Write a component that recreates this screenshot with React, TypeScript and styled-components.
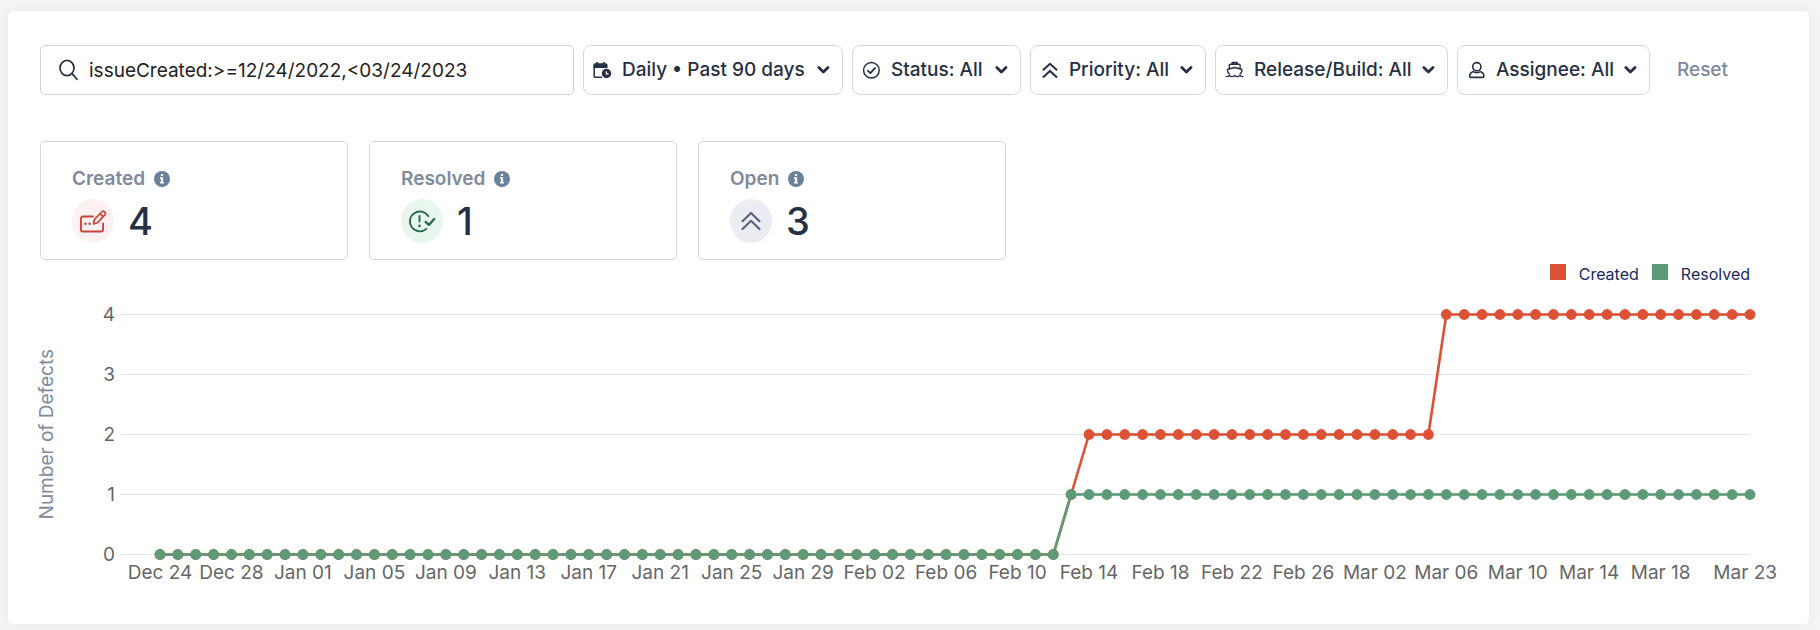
import React from "react";
import styled, { createGlobalStyle } from "styled-components";

const GlobalStyle = createGlobalStyle`
  *, *::before, *::after { box-sizing: border-box; }
  body {
    margin: 0;
    background: #f4f4f6;
    color: #263044;
    font-family: Inter, "Liberation Sans", sans-serif;
    font-size: 19px;
  }
  button, input, select { font: inherit; color: inherit; }
`;

const Page = styled.main`
  padding: 11px 11px 6px 8px;
`;

const Panel = styled.section`
  padding: 34px 32px 60px;
  border-radius: 5px;
  background: #fff;
  box-shadow: 0 0 14px rgba(40, 44, 70, 0.05);
`;

const Toolbar = styled.form`
  display: flex;
  gap: 9px;
  height: 50px;
`;

const SearchBox = styled.label`
  display: flex;
  flex: 1;
  align-items: center;
  gap: 10px;
  min-width: 0;
  padding: 0 18px;
  border: 1px solid #cfd3da;
  border-radius: 5px;
`;

const SearchInput = styled.input`
  flex: 1;
  min-width: 0;
  padding: 0;
  border: 0;
  outline: 0;
  background: none;
  color: #222;
`;

const Filter = styled.label<{ $minWidth: number }>`
  display: grid;
  grid-template-columns: 39px 1fr 26px;
  align-items: center;
  min-width: ${(p) => p.$minWidth}px;
  border: 1px solid #d5d7dd;
  border-radius: 8px;

  svg {
    grid-row: 1;
    pointer-events: none;
  }
  svg:first-child {
    grid-column: 1;
    margin-left: 9px;
  }
  svg:last-child {
    grid-column: 3;
  }
`;

const FilterSelect = styled.select`
  grid-row: 1;
  grid-column: 1 / -1;
  width: 100%;
  height: 48px;
  padding: 0 30px 2px 38px;
  border: 0;
  border-radius: 8px;
  background: none;
  appearance: none;
  font-weight: 500;
  cursor: pointer;
`;

const ResetButton = styled.button`
  padding: 0 49px 2px 18px;
  border: 0;
  background: none;
  color: #808a9b;
  font-weight: 500;
  cursor: pointer;
`;

const Stats = styled.div`
  display: grid;
  grid-template-columns: repeat(3, minmax(0, 308px));
  gap: 21px;
  margin-top: 46px;
`;

const StatCard = styled.article`
  padding: 25px 31px 16px;
  border: 1px solid #d6d7da;
  border-radius: 5px;
`;

const StatTitle = styled.h2`
  display: flex;
  align-items: center;
  gap: 9px;
  margin: 0;
  color: #808a9b;
  font-size: 19px;
  font-weight: 600;
  line-height: 24px;
`;

const StatBody = styled.div`
  display: flex;
  align-items: center;
  gap: 14px;
  margin-top: 8px;
`;

const Badge = styled.span<{ $tint: string }>`
  display: flex;
  align-items: center;
  justify-content: center;
  width: 42px;
  height: 44px;
  border-radius: 50%;
  background: ${(p) => p.$tint};
`;

const StatValue = styled.strong`
  font-size: 38px;
  font-weight: 500;
  line-height: 42px;
`;

const Legend = styled.ul`
  display: flex;
  justify-content: flex-end;
  gap: 13px;
  margin: 0 27px 0 0;
  padding: 4px 0 0;
  list-style: none;
  color: #20295f;
  font-size: 16px;
  line-height: 20px;
`;

const LegendItem = styled.li<{ $color: string }>`
  display: flex;
  gap: 13px;

  &::before {
    content: "";
    width: 16px;
    height: 16px;
    background: ${(p) => p.$color};
  }
`;

const Chart = styled.figure`
  display: flex;
  align-items: center;
  gap: 106px;
  margin: 20px 27px 0 0;
`;

const AxisTitle = styled.figcaption`
  width: 14px;
  color: #808a9b;
  line-height: 14px;
  white-space: nowrap;
  writing-mode: vertical-rl;
  transform: rotate(180deg);
`;

const Plot = styled.svg`
  display: block;
  flex: 1;
  min-width: 0;
  height: 260px;
  overflow: visible;
`;

const TickText = styled.text`
  fill: #666;
  font-size: 19px;
`;

const CREATED = "#dc5136";
const RESOLVED = "#5c9a78";
const DAYS = 90;
const ROW = 60;
const TOP = 10;

const start = Date.UTC(2022, 11, 24);
const MONTHS = ["Jan", "Feb", "Mar", "Apr", "May", "Jun", "Jul", "Aug", "Sep", "Oct", "Nov", "Dec"];

const dayLabel = (i: number) => {
  const d = new Date(start + i * 86400000);
  return `${MONTHS[d.getUTCMonth()]} ${String(d.getUTCDate()).padStart(2, "0")}`;
};

const days = Array.from({ length: DAYS }, (_, i) => i);
const created = days.map((i) => (i < 51 ? 0 : i < 52 ? 1 : i < 72 ? 2 : 4));
const resolved = days.map((i) => (i < 51 ? 0 : 1));

const xOf = (i: number) => `${(i / (DAYS - 1)) * 100}%`;
const yOf = (v: number) => TOP + (4 - v) * ROW + 0.5;

function Series({ values, color }: { values: number[]; color: string }) {
  return (
    <g stroke={color} fill={color}>
      {values.slice(1).map((v, i) => (
        <line key={i} x1={xOf(i)} y1={yOf(values[i])} x2={xOf(i + 1)} y2={yOf(v)} strokeWidth="2.6" />
      ))}
      {values.map((v, i) => (
        <circle key={i} cx={xOf(i)} cy={yOf(v)} r="5.4" stroke="none" />
      ))}
    </g>
  );
}

function TrendPlot() {
  return (
    <Plot role="img" aria-label="Defects created and resolved per day">
      {[4, 3, 2, 1, 0].map((v) => (
        <React.Fragment key={v}>
          <line x1="-40" x2="100%" y1={yOf(v)} y2={yOf(v)} stroke="#e6e6e8" />
          <TickText x="-45" y={yOf(v)} dy="6" textAnchor="end">
            {v}
          </TickText>
        </React.Fragment>
      ))}
      <Series values={created} color={CREATED} />
      <Series values={resolved} color={RESOLVED} />
      {days
        .filter((i) => i % 4 === 0 && i < 88)
        .map((i) => (
          <TickText key={i} x={xOf(i)} y={yOf(0)} dy="24" textAnchor="middle">
            {dayLabel(i)}
          </TickText>
        ))}
      <TickText x="100%" y={yOf(0)} dx="27" dy="24" textAnchor="end">
        {dayLabel(DAYS - 1)}
      </TickText>
    </Plot>
  );
}

const strokeProps = {
  fill: "none",
  stroke: "currentColor",
  strokeLinecap: "round" as const,
  strokeLinejoin: "round" as const,
  "aria-hidden": true,
};

const SearchIcon = () => (
  <svg width="20" height="22" viewBox="0 0 20 22" {...strokeProps} strokeWidth="1.7">
    <ellipse cx="8" cy="9" rx="7" ry="7.600" />
    <path d="M13 14.600L18 20.300" />
  </svg>
);

const ChevronIcon = () => (
  <svg width="14" height="10" viewBox="0 0 14 10" {...strokeProps} strokeWidth="2.8">
    <path d="M2.800 2.400L7.400 6.900l4.600-4.500" />
  </svg>
);

const CalendarIcon = () => (
  <svg width="20" height="20" viewBox="0.7 0 20 20" aria-hidden>
    <path d="M1.900 7.500V16a1.200 1.200 0 0 0 1.200 1.200h6.500" fill="none" stroke="currentColor" strokeWidth="1.500" />
    <path d="M1 8V5.200a2 2 0 0 1 2-2h1V2h1.700v1.200h4.900V2h1.700v1.200h1a2 2 0 0 1 2 2V8z" fill="currentColor" />
    <circle cx="14.200" cy="13.500" r="4.700" fill="currentColor" />
    <path d="M14 11.200v2.700h2.200" fill="none" stroke="#fff" strokeWidth="1.100" />
  </svg>
);

const StatusIcon = () => (
  <svg width="20" height="20" viewBox="0 0 20 20" {...strokeProps} strokeWidth="1.500">
    <circle cx="9.400" cy="10.300" r="7.800" />
    <path d="M5.800 10.600l2.600 2.500 4.700-5.200" strokeWidth="1.800" />
  </svg>
);

const PriorityIcon = () => (
  <svg width="20" height="20" viewBox="0 0 20 20" fill="none" stroke="currentColor" strokeWidth="2.100" aria-hidden>
    <path d="M2.900 10.300L10 3.800l7.100 6.500M2.900 17.400L10 10.900l7.100 6.500" />
  </svg>
);

const ShipIcon = () => (
  <svg width="20" height="20" viewBox="0 0 20 20" {...strokeProps} strokeWidth="1.400">
    <path d="M7.400 3.400V2.800h4.600v.6" strokeWidth="2" />
    <path d="M4.300 8.300V5.300c0-.6.400-1 1-1h8.800c.6 0 1 .4 1 1v3" />
    <path d="M4.400 14c-1.200-1-1.900-2.400-2-3.800 0-.5.200-.8.600-1L9.700 7.500l6.700 1.700c.4.200.6.500.6 1-.1 1.400-.8 2.800-2 3.800" />
    <path d="M1.300 16.600c1.500 0 2.300-.4 3.100-1.200.9.900 1.800 1.200 2.700 1.200s1.800-.4 2.600-1.200c.8.800 1.700 1.200 2.600 1.200s1.800-.4 2.700-1.200c.8.800 1.700 1.200 3 1.200" />
  </svg>
);

const UserIcon = () => (
  <svg width="20" height="20" viewBox="0 0 20 20" {...strokeProps} strokeWidth="1.600">
    <circle cx="9.800" cy="6.700" r="4.100" />
    <path d="M6.300 11.600c-2.300.8-3.600 2.600-3.600 4.700 0 .7.500 1.100 1.100 1.100h12c.6 0 1.100-.4 1.100-1.100 0-2.100-1.300-3.900-3.600-4.700-1 .7-2.200 1-3.500 1s-2.500-.3-3.500-1z" />
  </svg>
);

const InfoIcon = () => (
  <svg width="16" height="16" viewBox="0 0 16 16" aria-hidden>
    <circle cx="8" cy="8" r="8" fill="#68829c" />
    <path d="M6.900 2.900h2.200v2.200H6.900zM6 6.300h3.100v4.700H10v1.600H6V11h.9V7.900H6z" fill="#fff" />
  </svg>
);

const EditIcon = () => (
  <svg width="28" height="26" viewBox="0 0 28 26" {...strokeProps} stroke="#c8453d" strokeWidth="1.900">
    <path d="M14 8.500H3.900a2 2 0 0 0-2 2v11a2 2 0 0 0 2 2h18.200a2 2 0 0 0 2-2v-6" />
    <path d="M14.600 16l.7-4.300 7.300-7.700a2.100 2.100 0 0 1 3.200 2.800l-7.400 8z M21 5.700l3 2.900" strokeWidth="1.700" />
    <path d="M6.300 15.800h.1M10.500 15.800h.1" strokeWidth="2.400" />
  </svg>
);

const ResolveIcon = () => (
  <svg width="28" height="26" viewBox="0 0 28 26" {...strokeProps} stroke="#28694f" strokeWidth="1.800">
    <path d="M20.300 8.300A9.900 9.900 0 1 0 18.400 20.800" />
    <path d="M11.500 8v5.600" strokeWidth="1.900" />
    <path d="M11.500 17.800v.1" strokeWidth="2.600" />
    <path d="M17.600 13.900l3.300 3 5.300-5.900" strokeWidth="2.300" />
  </svg>
);

const OpenIcon = () => (
  <svg width="22" height="20" viewBox="0 0 22 20" {...strokeProps} stroke="#5c6280" strokeWidth="2.200">
    <path d="M2.500 10.200L11 2l8.500 8.200M2.500 18L11 9.800l8.500 8.200" />
  </svg>
);

const filters = [
  { name: "Date range", value: "Daily • Past 90 days", minWidth: 260, Icon: CalendarIcon },
  { name: "Status", value: "Status: All", minWidth: 169, Icon: StatusIcon },
  { name: "Priority", value: "Priority: All", minWidth: 176, Icon: PriorityIcon },
  { name: "Release or build", value: "Release/Build: All", minWidth: 233, Icon: ShipIcon },
  { name: "Assignee", value: "Assignee: All", minWidth: 193, Icon: UserIcon },
];

const stats = [
  { title: "Created", value: 4, tint: "#fdf1f1", Icon: EditIcon },
  { title: "Resolved", value: 1, tint: "#e8f6ee", Icon: ResolveIcon },
  { title: "Open", value: 3, tint: "#ecedf3", Icon: OpenIcon },
];

export default function App() {
  return (
    <>
      <GlobalStyle />
      <Page>
        <Panel>
          <Toolbar onSubmit={(e) => e.preventDefault()}>
            <SearchBox>
              <SearchIcon />
              <SearchInput
                type="text"
                aria-label="Search defects"
                defaultValue="issueCreated:>=12/24/2022,<03/24/2023"
              />
            </SearchBox>
            {filters.map(({ name, value, minWidth, Icon }) => (
              <Filter key={name} $minWidth={minWidth}>
                <Icon />
                <FilterSelect aria-label={name}>
                  <option>{value}</option>
                </FilterSelect>
                <ChevronIcon />
              </Filter>
            ))}
            <ResetButton type="reset">Reset</ResetButton>
          </Toolbar>

          <Stats>
            {stats.map(({ title, value, tint, Icon }) => (
              <StatCard key={title}>
                <StatTitle>
                  {title}
                  <InfoIcon />
                </StatTitle>
                <StatBody>
                  <Badge $tint={tint}>
                    <Icon />
                  </Badge>
                  <StatValue>{value}</StatValue>
                </StatBody>
              </StatCard>
            ))}
          </Stats>

          <Legend>
            <LegendItem $color={CREATED}>Created</LegendItem>
            <LegendItem $color={RESOLVED}>Resolved</LegendItem>
          </Legend>

          <Chart>
            <AxisTitle>Number of Defects</AxisTitle>
            <TrendPlot />
          </Chart>
        </Panel>
      </Page>
    </>
  );
}
